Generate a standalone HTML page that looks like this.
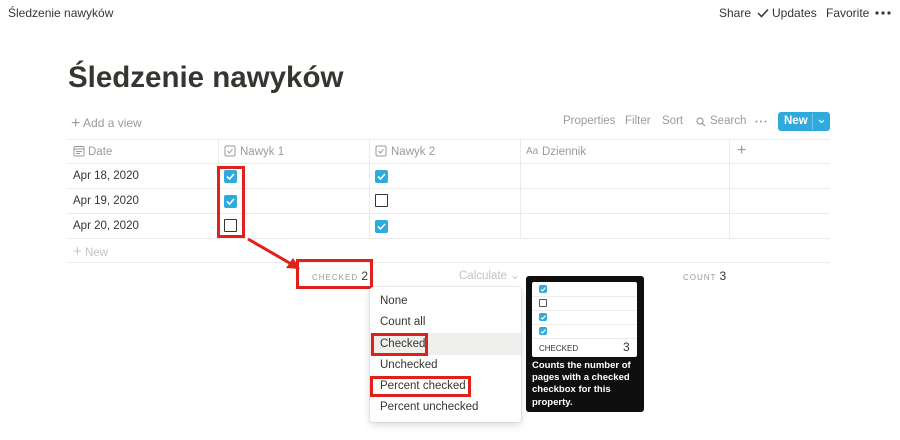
<!DOCTYPE html>
<html><head><meta charset="utf-8"><style>
*{margin:0;padding:0;box-sizing:border-box}
body{width:900px;height:440px;background:#fff;font-family:"Liberation Sans",sans-serif;color:#37352f;position:relative;overflow:hidden}
.a{position:absolute;white-space:nowrap}
.g{color:#9b9a97}
.hl{position:absolute;height:1px;background:#ebebea}
.vl{position:absolute;width:1px;background:#ebebea}
.cb{position:absolute;width:13px;height:13px;background:#2eaadc;border-radius:2px}
.cb svg{position:absolute;left:1px;top:1px}
.ub{position:absolute;width:13px;height:13px;border:1.5px solid #37352f;border-radius:1px}
.red{position:absolute;border:3px solid #e0201b}
.mi{position:absolute;left:380px;font-size:11.5px}
</style></head><body>
<div class="a" style="left:8px;top:6px;font-size:12px">Śledzenie nawyków</div>
<div class="a" style="left:719px;top:6px;font-size:12px">Share</div>
<svg class="a" style="left:757px;top:8px" width="12" height="10"><path d="M1 5 L4.5 8.5 L11 1.5" stroke="#37352f" stroke-width="1.5" fill="none"/></svg>
<div class="a" style="left:772px;top:6px;font-size:12px">Updates</div>
<div class="a" style="left:826px;top:6px;font-size:12px">Favorite</div>
<svg class="a" style="left:875px;top:11px" width="16" height="4"><circle cx="2" cy="2" r="1.6" fill="#37352f"/><circle cx="8" cy="2" r="1.6" fill="#37352f"/><circle cx="14" cy="2" r="1.6" fill="#37352f"/></svg>
<div class="a" style="left:68px;top:61px;font-size:29.5px;font-weight:bold;color:#37352f">Śledzenie nawyków</div>
<div class="a g" style="left:71px;top:114px;font-size:12px"><span style="font-size:16px;position:relative;top:1px">+</span> Add a view</div>
<div class="a g" style="left:563px;top:115px;font-size:11.5px">Properties</div>
<div class="a g" style="left:625px;top:115px;font-size:11.5px">Filter</div>
<div class="a g" style="left:662px;top:115px;font-size:11.5px">Sort</div>
<svg class="a" style="left:696px;top:117px" width="10" height="10"><circle cx="4" cy="4" r="3" stroke="#9b9a97" fill="none" stroke-width="1.2"/><path d="M6 6 L9 9" stroke="#9b9a97" stroke-width="1.2"/></svg>
<div class="a g" style="left:710px;top:115px;font-size:11.5px">Search</div>
<svg class="a" style="left:755px;top:120px" width="12" height="3"><circle cx="1.5" cy="1.5" r="1" fill="#9b9a97"/><circle cx="6" cy="1.5" r="1" fill="#9b9a97"/><circle cx="10.5" cy="1.5" r="1" fill="#9b9a97"/></svg>
<div class="a" style="left:778px;top:112px;width:52px;height:19px;background:#2eaadc;border-radius:3px;color:#fff;font-size:11.5px;font-weight:bold;padding:3px 0 0 6px">New<span style="position:absolute;left:34px;top:1px;width:1px;height:17px;background:#6fc6e8"></span><svg style="position:absolute;left:40px;top:7px" width="7" height="5"><path d="M1 1l2.5 2.5L6 1" stroke="#fff" stroke-width="1.2" fill="none"/></svg></div>
<div class="hl" style="left:67px;top:139px;width:763px"></div>
<div class="hl" style="left:67px;top:163px;width:763px"></div>
<div class="hl" style="left:67px;top:188px;width:763px"></div>
<div class="hl" style="left:67px;top:213px;width:763px"></div>
<div class="hl" style="left:67px;top:238px;width:763px"></div>
<div class="hl" style="left:67px;top:262px;width:763px"></div>
<div class="vl" style="left:218px;top:139px;height:99px"></div>
<div class="vl" style="left:369px;top:139px;height:99px"></div>
<div class="vl" style="left:520px;top:139px;height:99px"></div>
<div class="vl" style="left:729px;top:139px;height:99px"></div>
<svg class="a" style="left:73px;top:145px" width="12" height="12"><rect x="1" y="1.5" width="10" height="9.5" rx="1.5" stroke="#9b9a97" fill="none"/><path d="M1 4h10M3 6.5h6M3 8.5h4" stroke="#9b9a97"/></svg>
<div class="a g" style="left:88px;top:146px;font-size:11.5px">Date</div>
<svg class="a" style="left:224px;top:145px" width="12" height="12"><rect x="1" y="1" width="10" height="10" rx="1.5" stroke="#9b9a97" fill="none"/><path d="M3.5 6l2 2 3-4" stroke="#9b9a97" fill="none"/></svg>
<div class="a g" style="left:240px;top:146px;font-size:11.5px">Nawyk 1</div>
<svg class="a" style="left:375px;top:145px" width="12" height="12"><rect x="1" y="1" width="10" height="10" rx="1.5" stroke="#9b9a97" fill="none"/><path d="M3.5 6l2 2 3-4" stroke="#9b9a97" fill="none"/></svg>
<div class="a g" style="left:391px;top:146px;font-size:11.5px">Nawyk 2</div>
<div class="a g" style="left:526px;top:146px;font-size:10px">Aa</div>
<div class="a g" style="left:542px;top:146px;font-size:11.5px">Dziennik</div>
<div class="a g" style="left:737px;top:142px;font-size:16px">+</div>
<div class="a" style="left:73px;top:170px;font-size:11.5px">Apr 18, 2020</div>
<div class="a" style="left:73px;top:195px;font-size:11.5px">Apr 19, 2020</div>
<div class="a" style="left:73px;top:220px;font-size:11.5px">Apr 20, 2020</div>
<div class="cb" style="left:224px;top:170px"><svg width="11" height="11"><path d="M2 5.5l2.5 2.5 4.5-5" stroke="#fff" stroke-width="1.6" fill="none"/></svg></div>
<div class="cb" style="left:224px;top:195px"><svg width="11" height="11"><path d="M2 5.5l2.5 2.5 4.5-5" stroke="#fff" stroke-width="1.6" fill="none"/></svg></div>
<div class="ub" style="left:224px;top:219px"></div>
<div class="cb" style="left:375px;top:170px"><svg width="11" height="11"><path d="M2 5.5l2.5 2.5 4.5-5" stroke="#fff" stroke-width="1.6" fill="none"/></svg></div>
<div class="ub" style="left:375px;top:194px"></div>
<div class="cb" style="left:375px;top:220px"><svg width="11" height="11"><path d="M2 5.5l2.5 2.5 4.5-5" stroke="#fff" stroke-width="1.6" fill="none"/></svg></div>
<div class="a" style="left:73px;top:243px;font-size:11.5px;color:#c4c3c0"><span style="font-size:15px">+</span> New</div>
<div class="red" style="left:217px;top:166px;width:28px;height:72px"></div>
<svg class="a" style="left:245px;top:236px" width="60" height="40"><path d="M3 3 L48 29" stroke="#e0201b" stroke-width="3"/><path d="M55 33 L41 32 L48 22 Z" fill="#e0201b"/></svg>
<div class="red" style="left:296px;top:259px;width:77px;height:30px"></div>
<div class="a g" style="left:312px;top:269px;font-size:8px;letter-spacing:1px">CHECKED <span style="font-size:12px;color:#37352f;letter-spacing:0">2</span></div>
<div class="a" style="left:459px;top:268px;font-size:11.5px;color:#c4c3c0">Calculate ⌄</div>
<div class="a g" style="left:683px;top:269px;font-size:8px;letter-spacing:1px">COUNT <span style="font-size:12px;color:#37352f;letter-spacing:0">3</span></div>
<div class="a" style="left:370px;top:287px;width:151px;height:135px;background:#fff;border-radius:3px;box-shadow:0 0 0 1px rgba(15,15,15,.06),0 3px 8px rgba(15,15,15,.15)"></div>
<div class="a" style="left:370px;top:333px;width:151px;height:22px;background:#efefee"></div>
<div class="mi" style="top:295px">None</div>
<div class="mi" style="top:316px">Count all</div>
<div class="mi" style="top:338px">Checked</div>
<div class="mi" style="top:359px">Unchecked</div>
<div class="mi" style="top:380px">Percent checked</div>
<div class="mi" style="top:401px">Percent unchecked</div>
<div class="red" style="left:371px;top:333px;width:57px;height:23px"></div>
<div class="red" style="left:370px;top:376px;width:101px;height:21px"></div>
<div class="a" style="left:526px;top:276px;width:118px;height:136px;background:#0f0f0f;border-radius:3px"></div>
<div class="a" style="left:532px;top:282px;width:105px;height:75px;background:#fff;border-radius:2px"></div>
<div class="hl" style="left:532px;top:296px;width:105px"></div>
<div class="hl" style="left:532px;top:310px;width:105px"></div>
<div class="hl" style="left:532px;top:324px;width:105px"></div>
<div class="hl" style="left:532px;top:338px;width:105px"></div>
<div class="cb" style="left:539px;top:285px;width:8px;height:8px"><svg width="7" height="7" style="left:0.5px;top:0.5px"><path d="M1 3.5l1.5 1.5 3-3.5" stroke="#fff" stroke-width="1.2" fill="none"/></svg></div>
<div class="ub" style="left:539px;top:299px;width:8px;height:8px;border:1px solid #555"></div>
<div class="cb" style="left:539px;top:313px;width:8px;height:8px"><svg width="7" height="7" style="left:0.5px;top:0.5px"><path d="M1 3.5l1.5 1.5 3-3.5" stroke="#fff" stroke-width="1.2" fill="none"/></svg></div>
<div class="cb" style="left:539px;top:327px;width:8px;height:8px"><svg width="7" height="7" style="left:0.5px;top:0.5px"><path d="M1 3.5l1.5 1.5 3-3.5" stroke="#fff" stroke-width="1.2" fill="none"/></svg></div>
<div class="a" style="left:539px;top:344px;font-size:8px">CHECKED</div>
<div class="a" style="left:623px;top:340px;font-size:12px">3</div>
<div class="a" style="left:532px;top:360px;font-size:9.5px;font-weight:bold;color:#fff;line-height:12.2px;white-space:normal;width:110px">Counts the number of pages with a checked checkbox for this property.</div>
</body></html>
